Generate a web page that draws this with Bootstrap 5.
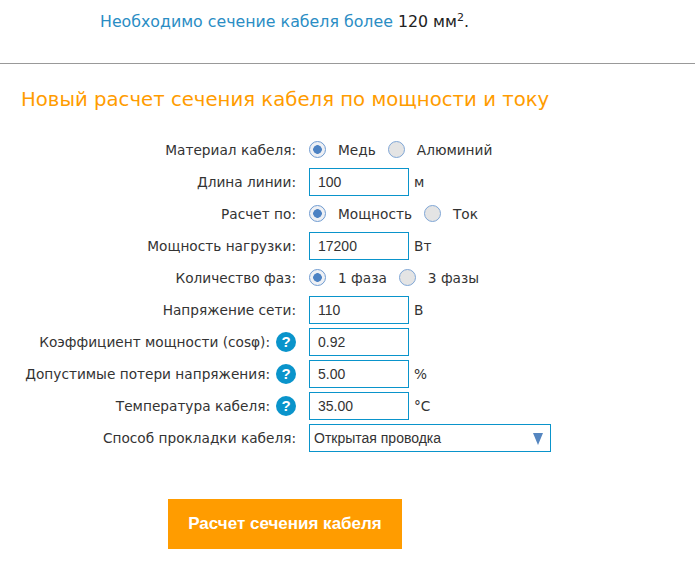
<!DOCTYPE html>
<html lang="ru">
<head>
  <meta charset="UTF-8"/>
  <meta name="viewport" content="width=device-width, initial-scale=1.0"/>
  <title>Расчет сечения кабеля</title>
  <link href="https://cdn.jsdelivr.net/npm/bootstrap@5.3.0/dist/css/bootstrap.min.css" rel="stylesheet"/>
  <style>
    body { font-family: "DejaVu Sans", "Noto Sans", sans-serif; font-size: 13.7px; color: #333; background: #fff; }
    .result-line { padding: 11px 0 0 100px; height: 63px; font-size: 15.8px; color: #222; margin: 0; line-height: 22px; }
    .result-line span { color: #2a8dc4; }
    .result-line sup { font-size: 11px; top: -6px; }
    .page-rule { margin: 0; border: 0; border-top: 1px solid #999; opacity: 1; }
    .calc-title { margin: 23px 0 21px 21px; color: #ff9c00; font-size: 19.7px; font-weight: 400; line-height: 26px; }
    .calc-row { height: 32px; }
    .calc-label { width: 296px; }
    .calc-control { margin-left: 13px; }
    .calc-input.form-control { width: 100px; height: 28px; padding: 0 8px; border: 1px solid #0a94cb; border-radius: 0; font: 14px "Liberation Sans", sans-serif; color: #333; }
    .calc-select.form-select { width: 242px; height: 28px; padding: 0 4px; border: 1px solid #0a94cb; border-radius: 0; font: 14px "Liberation Sans", sans-serif; color: #333; background-image: none; }
    .select-wrap { width: 242px; }
    .select-arrow { position: absolute; right: 8px; top: 9px; width: 0; height: 0; border-left: 5.5px solid transparent; border-right: 5.5px solid transparent; border-top: 12px solid #5586c0; pointer-events: none; }
    .calc-radio.form-check-input { width: 17px; height: 17px; margin: 0; background: #e4e4e4; border: 1px solid #7fa6d6; }
    .calc-radio.form-check-input:checked { background: radial-gradient(circle, #4c82c3 0 4px, #eef0f4 4.6px); border-color: #6f9bd1; }
    .radio-text { margin: 0 12px 0 12px; }
    .unit-text { margin-left: 5px; }
    .help-mark { width: 20px; height: 20px; margin-left: 6px; border-radius: 50%; background: #0a94cb; color: #fff; font: 700 15px/20px "Liberation Sans", sans-serif; text-align: center; flex: none; }
    .calc-submit.btn { display: block; width: 234px; height: 50px; margin: 45px 0 0 168px; background: #ff9c00; border: 0; border-radius: 0; color: #fff; font: 700 17px "Liberation Sans", sans-serif; }
  </style>
</head>
<body>
  <p class="result-line"><span>Необходимо сечение кабеля более</span> 120 мм<sup>2</sup>.</p>
  <hr class="page-rule"/>
  <h2 class="calc-title">Новый расчет сечения кабеля по мощности и току</h2>

  <form id="calcForm"></form>
  <button class="btn calc-submit" type="button">Расчет сечения кабеля</button>

  <script>
    const rows = [
      { label: "Материал кабеля:", radios: ["Медь", "Алюминий"] },
      { label: "Длина линии:", value: "100", unit: "м" },
      { label: "Расчет по:", radios: ["Мощность", "Ток"] },
      { label: "Мощность нагрузки:", value: "17200", unit: "Вт" },
      { label: "Количество фаз:", radios: ["1 фаза", "3 фазы"] },
      { label: "Напряжение сети:", value: "110", unit: "В" },
      { label: "Коэффициент мощности (cosφ):", value: "0.92", unit: "", help: true },
      { label: "Допустимые потери напряжения:", value: "5.00", unit: "%", help: true },
      { label: "Температура кабеля:", value: "35.00", unit: "°C", help: true },
      { label: "Способ прокладки кабеля:", select: "Открытая проводка" }
    ];

    document.getElementById("calcForm").innerHTML = rows.map((row, index) => {
      let control;
      if (row.radios) {
        control = row.radios.map((name, i) => `<input class="form-check-input calc-radio" type="radio" name="r${index}" ${i === 0 ? "checked" : ""}/><span class="radio-text">${name}</span>`).join("");
      } else if (row.select) {
        control = `<div class="position-relative select-wrap"><select class="form-select calc-select"><option>${row.select}</option></select><span class="select-arrow"></span></div>`;
      } else {
        control = `<input class="form-control calc-input" type="text" value="${row.value}"/><span class="unit-text">${row.unit}</span>`;
      }
      return `<div class="d-flex align-items-center calc-row">
        <div class="d-flex align-items-center justify-content-end calc-label">${row.label}${row.help ? '<span class="help-mark">?</span>' : ""}</div>
        <div class="d-flex align-items-center calc-control">${control}</div>
      </div>`;
    }).join("");
  </script>
  <script src="https://cdn.jsdelivr.net/npm/bootstrap@5.3.0/dist/js/bootstrap.bundle.min.js"></script>
</body>
</html>
